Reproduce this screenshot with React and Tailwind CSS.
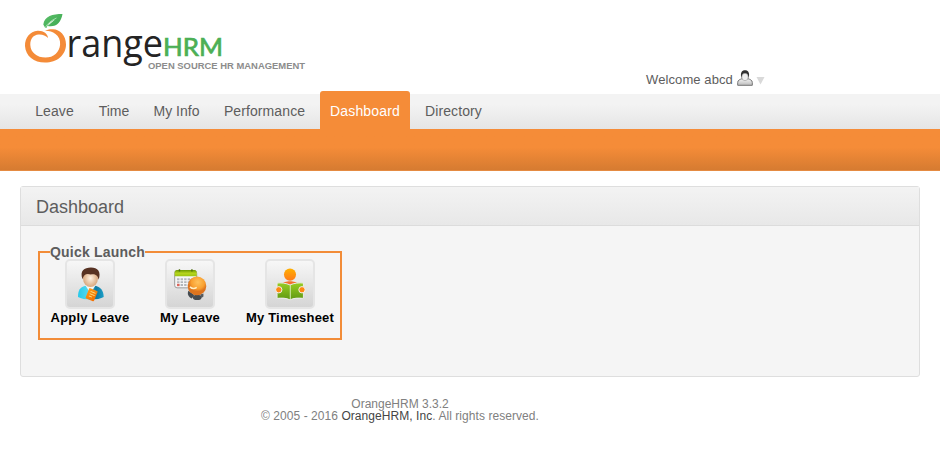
const NAV = [
  { label: "Leave", box: "w-[59px]", text: "tracking-[0.1px]" },
  { label: "Time", box: "w-[50px]", text: "" },
  { label: "My Info", box: "w-[65px]", text: "" },
  { label: "Performance", box: "w-[101px]", text: "tracking-[0.1px]" },
  { label: "Dashboard", box: "w-[90px]", text: "tracking-[0.15px]", active: true },
  { label: "Directory", box: "w-[77px]", text: "tracking-[0.1px]" },
];

function Logo() {
  return (
    <svg width="300" height="76" viewBox="20 10 300 76" className="block overflow-visible" aria-label="OrangeHRM">
      <defs>
        <linearGradient id="leaf" x1="0" y1="0" x2="1" y2="1">
          <stop offset="0" stopColor="#5cc06a" />
          <stop offset="1" stopColor="#3aa64e" />
        </linearGradient>
      </defs>
      <path
        fill="#f48b38"
        d="M48 38C48 33.500 43 30.300 37.500 30.700C30 31.300 24.800 38 25 46C25.500 56 34 62.600 45 62.600C57 62.600 66 55 66 44.500C66 35.500 60 29.500 53 29.300C49.500 29.200 46.500 29.800 45 30.800C49 30.700 52.500 31.800 55.500 34C58.800 36.500 60.400 40 60.100 44.500C59.600 52.300 53.500 57.600 45.500 57.600C37 57.600 30.600 52.500 30.300 45C30.100 39 33.500 34.800 38.500 34.500C42.500 34.200 45.500 35.500 48 38Z"
      />
      <path fill="url(#leaf)" d="M43.300 24.500C44.500 16 52.500 14 62.500 14C61 22.500 56 27.800 47.500 26L55 19.500C50.500 21.500 48 24 46.300 28L45 27.500Z" />
      <path d="M45.300 27.500C47.500 23.500 51 20.500 56.500 18" fill="none" stroke="#c9efcd" strokeWidth="0.700" />
      <text x="66.500" y="56.700" fontSize="38" fill="#242424" fontFamily="Open Sans, sans-serif" textLength="96.500" lengthAdjust="spacingAndGlyphs">range</text>
      <text x="163" y="55.800" fontSize="25" fill="#4caf55" stroke="#4caf55" strokeWidth="0.700" fontFamily="Lato, sans-serif" textLength="60" lengthAdjust="spacingAndGlyphs">HRM</text>
      <text x="148" y="68.700" fontSize="9.500" fontWeight="700" fill="#8c8c8c" fontFamily="Liberation Sans, sans-serif" textLength="157" lengthAdjust="spacingAndGlyphs">OPEN SOURCE HR MANAGEMENT</text>
    </svg>
  );
}

function UserIcon() {
  return (
    <svg width="16" height="17" viewBox="0 0 16 17">
      <defs>
        <linearGradient id="coat" x1="0" y1="0" x2="0" y2="1">
          <stop offset="0" stopColor="#f5f5f5" />
          <stop offset="1" stopColor="#bcbcbc" />
        </linearGradient>
      </defs>
      <path d="M0.700 15.300V12.500C0.700 10 3 9.500 5 8.700H11C13 9.500 15.300 10 15.300 12.500V15.300Z" fill="url(#coat)" stroke="#757575" />
      <path d="M4 6C3.500 2 5.500 0.300 8 0.300S12.500 2 12 6L11 8.500H5Z" fill="#303030" />
      <ellipse cx="8" cy="7" rx="3.200" ry="3.700" fill="#eeeeee" stroke="#888" strokeWidth="0.500" />
    </svg>
  );
}

function ApplyIcon() {
  return (
    <svg width="48" height="48" viewBox="0 0 48 48">
      <defs>
        <linearGradient id="shirt" x1="0" y1="0" x2="1" y2="0">
          <stop offset="0" stopColor="#27c9ea" />
          <stop offset="0.400" stopColor="#54d8ef" />
          <stop offset="0.700" stopColor="#1178a0" />
          <stop offset="1" stopColor="#1a9fc8" />
        </linearGradient>
        <radialGradient id="face">
          <stop offset="0" stopColor="#fff3e5" />
          <stop offset="1" stopColor="#d9a77c" />
        </radialGradient>
        <linearGradient id="book" x1="0" y1="0" x2="1" y2="1">
          <stop offset="0" stopColor="#ff9c19" />
          <stop offset="1" stopColor="#f26d00" />
        </linearGradient>
      </defs>
      <path d="M11.500 37.500C11.500 30 13.500 27.500 20 25.500H29C35 27.500 38 30 38.300 37.500C33 41 17 41 11.500 37.500Z" fill="url(#shirt)" />
      <path d="M19 25L24.500 34L30 25Z" fill="#f4f7f8" />
      <ellipse cx="24.500" cy="18" rx="7.800" ry="9.200" fill="url(#face)" />
      <path d="M16.200 19C13 10 18 6.700 25 6.700C32 6.700 36 11 33 19.500C32 14.500 29.500 13.500 25 14C20 12.500 17.500 14 16.200 19Z" fill="#573223" />
      <g transform="rotate(22 26 35)">
        <rect x="21" y="29.500" width="9.500" height="11.500" rx="1" fill="url(#book)" />
        <path d="M23.500 32.500H29M23.500 35H29M23.500 37.500H27" stroke="#ffe58b" />
      </g>
    </svg>
  );
}

function LeaveIcon() {
  return (
    <svg width="48" height="48" viewBox="0 0 48 48">
      <defs>
        <linearGradient id="calTop" x1="0" y1="0" x2="0" y2="1">
          <stop offset="0" stopColor="#6d9a00" />
          <stop offset="0.500" stopColor="#b7d51c" />
          <stop offset="1" stopColor="#9ac412" />
        </linearGradient>
        <radialGradient id="head" cx=".55" cy=".3">
          <stop offset="0" stopColor="#ffc25d" />
          <stop offset="0.700" stopColor="#f9a030" />
          <stop offset="1" stopColor="#dd741f" />
        </radialGradient>
      </defs>
      <rect x="8" y="10" width="23" height="18" rx="2.500" fill="#f5f5f5" stroke="#999" />
      <path d="M8 16V12C8 10.500 9 9.500 10.500 9.500H28.500C30 9.500 31 10.500 31 12V16Z" fill="url(#calTop)" />
      <path d="M13 8.500V11M26 8.500V11" stroke="#4f6e12" strokeWidth="1.500" />
      <path d="M10.500 19H29M10.500 22H29M10.500 25H25" stroke="#b2b6ba" strokeWidth="2" strokeDasharray="2.500 1.200" />
      <path d="M10.500 25H13" stroke="#df6258" strokeWidth="2.500" />
      <path d="M22.500 31C20.500 34 22.500 38 26 39L28.500 35.500Z" fill="#454b51" />
      <ellipse cx="31.500" cy="38" rx="4.500" ry="2.700" fill="#464b50" />
      <path d="M34.500 35L38 34V37L36 38.500Z" fill="#565b60" />
      <circle cx="31.300" cy="26" r="9.700" fill="url(#head)" />
      <path d="M24 27C26 29 28.500 29.300 31 27.500" fill="none" stroke="#fff0c5" strokeWidth="1.500" />
    </svg>
  );
}

function TimesheetIcon() {
  return (
    <svg width="48" height="48" viewBox="0 0 48 48">
      <defs>
        <linearGradient id="person" x1="0" y1="0" x2="0" y2="1">
          <stop offset="0" stopColor="#ffb000" />
          <stop offset="1" stopColor="#ff7a1a" />
        </linearGradient>
        <linearGradient id="pages" x1="0" y1="0" x2="0" y2="1">
          <stop offset="0" stopColor="#97cd22" />
          <stop offset="1" stopColor="#5f9813" />
        </linearGradient>
      </defs>
      <circle cx="24" cy="14.200" r="6.300" fill="url(#person)" />
      <path d="M16 24C17 20 31 20 32 24L24 25.500Z" fill="#f4702b" />
      <path d="M24 25C20 23 14 22.500 10.500 23V39C15 38.500 20 38.500 24 40.500C28 38.500 33 38.500 38 39V23C34 22.500 28 23 24 25Z" fill="url(#pages)" stroke="#ededed" />
      <path d="M24.300 25V40" stroke="#d9edbb" />
      <circle cx="12.300" cy="30" r="3.300" fill="#ff8813" stroke="#f3f3f3" />
      <circle cx="36.500" cy="30" r="3.300" fill="#ff8813" stroke="#f3f3f3" />
    </svg>
  );
}

function Launch({ label, width, spacing, children }) {
  return (
    <a className={`flex flex-col items-center ${width}`}>
      <span className="flex h-[50px] w-[50px] items-center justify-center rounded-[5px] border-2 border-[#e5e5e5] bg-linear-to-b from-[#f7f7f7] to-[#d5d5d5]">
        {children}
      </span>
      <span className={`text-[13px] leading-[18px] font-bold whitespace-nowrap text-black ${spacing}`}>{label}</span>
    </a>
  );
}

export default function App() {
  return (
    <div className="h-[472px] w-[940px] overflow-hidden bg-white font-['Liberation_Sans',Arial,sans-serif] text-[#5d5d5d]">
      <header className="flex h-[94px] justify-between pt-2.5 pr-[175px] pl-5">
        <Logo />
        <div className="mb-[7px] flex h-[17px] items-center self-end">
          <span className="w-[91px] pt-0.5 text-[13px] leading-4 tracking-[0.1px] whitespace-nowrap">Welcome abcd</span>
          <UserIcon />
          <svg className="mt-[5px] ml-[3px]" width="9" height="8" viewBox="0 0 9 8"><path d="M0.500 0H8.500L4.500 7.500Z" fill="#d9d9d9" /></svg>
        </div>
      </header>
      <nav className="flex h-[35px] items-end gap-[5px] bg-linear-to-b from-[#f3f3f3] from-30% to-[#e5e5e5] pl-[25px]">
        {NAV.map((n) => (
          <a
            key={n.label}
            className={`flex shrink-0 justify-center text-sm leading-[35px] whitespace-nowrap ${n.box} ${n.text} ${n.active ? "h-[38px] rounded-t-[3px] bg-[#f58c38] pt-[3px] text-white" : "h-[35px]"}`}
          >
            {n.label}
          </a>
        ))}
      </nav>
      <div className="h-[42px] border-b border-[#e58b42] bg-linear-to-b from-[#f58c38] from-45% to-[#d67b31]" />
      <main className="mx-5 mt-[15px] h-[191px] rounded-[3px] border border-[#dedede] bg-[#f5f5f5]">
        <h1 className="h-[39px] border-b border-[#dcdcdc] bg-linear-to-b from-[#f3f3f3] to-[#e8e8e8] pl-[15px] text-lg leading-[41px]">Dashboard</h1>
        <fieldset className="mt-[18px] ml-[17px] h-24 w-[304px] border-2 border-[#f28c38] pl-[3px]">
          <legend className="ml-[7px] h-4 w-[95px] text-sm leading-4 font-bold tracking-[0.2px] whitespace-nowrap">Quick Launch</legend>
          <div className="-mt-px flex">
            <Launch label="Apply Leave" width="w-[94px]" spacing="tracking-[0.2px]"><ApplyIcon /></Launch>
            <Launch label="My Leave" width="w-[106px]" spacing="tracking-[0.2px]"><LeaveIcon /></Launch>
            <Launch label="My Timesheet" width="w-[94px]" spacing="tracking-[0.2px]"><TimesheetIcon /></Launch>
          </div>
        </fieldset>
      </main>
      <footer className="mt-[21px] ml-[200px] w-[400px] text-center text-xs leading-3 text-[#808080]">
        <p>OrangeHRM 3.3.2</p>
        <p className="tracking-[0.06px]">© 2005 - 2016 <a className="text-[#454545]">OrangeHRM, Inc</a>. All rights reserved.</p>
      </footer>
    </div>
  );
}
